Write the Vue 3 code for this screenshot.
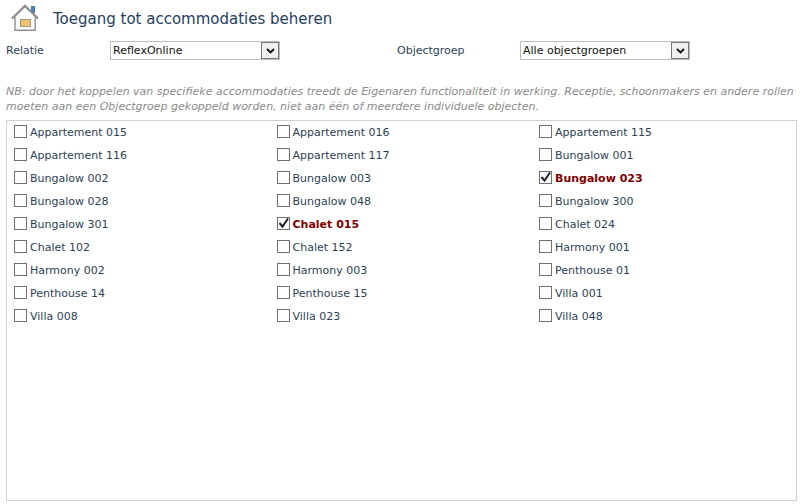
<template>
  <div class="page">
    <div class="header">
      <svg class="home" width="30" height="30" viewBox="0 0 30 30">
        <rect x="21" y="3" width="4" height="7" fill="#4a7fbd" />
        <path d="M5 14 V27.3 H25.2 V14" fill="none" stroke="#8f8f8f" stroke-width="1.4" />
        <path d="M2 15.5 L15 3 L28 15.5" fill="none" stroke="#8f8f8f" stroke-width="2.4" />
        <rect x="10.5" y="16.5" width="10" height="7" fill="#f0c36d" stroke="#a89a80" />
      </svg>
      <h1>Toegang tot accommodaties beheren</h1>
    </div>

    <div class="filters">
      <label class="filter-label first">Relatie</label>
      <div class="select">
        <span class="select-text">ReflexOnline</span>
        <span class="select-btn">
          <svg width="9" height="6" viewBox="0 0 9 6"><path d="M1 1 L4.5 4.5 L8 1" fill="none" stroke="#111" stroke-width="1.8" /></svg>
        </span>
      </div>
      <label class="filter-label second">Objectgroep</label>
      <div class="select">
        <span class="select-text">Alle objectgroepen</span>
        <span class="select-btn">
          <svg width="9" height="6" viewBox="0 0 9 6"><path d="M1 1 L4.5 4.5 L8 1" fill="none" stroke="#111" stroke-width="1.8" /></svg>
        </span>
      </div>
    </div>

    <p class="note">NB: door het koppelen van specifieke accommodaties treedt de Eigenaren functionaliteit in werking. Receptie, schoonmakers en andere rollen moeten aan een Objectgroep gekoppeld worden, niet aan één of meerdere individuele objecten.</p>

    <div class="list">
      <div v-for="item in items" :key="item.name" class="item" :class="{ selected: item.checked }">
        <span class="box">
          <svg v-if="item.checked" width="11" height="11" viewBox="0 0 11 11"><path d="M1.5 5 L4.5 8.5 L10 0.5" fill="none" stroke="#1a2230" stroke-width="2" /></svg>
        </span>
        <span>{{ item.name }}</span>
      </div>
    </div>
  </div>
</template>

<script setup>
const checkedNames = ['Bungalow 023', 'Chalet 015']
const names = [
  'Appartement 015', 'Appartement 016', 'Appartement 115',
  'Appartement 116', 'Appartement 117', 'Bungalow 001',
  'Bungalow 002', 'Bungalow 003', 'Bungalow 023',
  'Bungalow 028', 'Bungalow 048', 'Bungalow 300',
  'Bungalow 301', 'Chalet 015', 'Chalet 024',
  'Chalet 102', 'Chalet 152', 'Harmony 001',
  'Harmony 002', 'Harmony 003', 'Penthouse 01',
  'Penthouse 14', 'Penthouse 15', 'Villa 001',
  'Villa 008', 'Villa 023', 'Villa 048'
]
const items = names.map((name) => ({ name, checked: checkedNames.includes(name) }))
</script>

<style>
html, body {
  background: #fff;
}
</style>

<style scoped>
.page {
  width: 801px;
  height: 504px;
  box-sizing: border-box;
  padding: 3px 4px 3px 6px;
  font-family: "DejaVu Sans", Verdana, sans-serif;
  font-size: 11px;
  color: #2b3f55;
  overflow: hidden;
}

.header {
  display: flex;
  align-items: center;
  height: 30px;
  padding-left: 4px;
}

.home {
  flex: none;
}

h1 {
  margin: 1px 0 0 13px;
  font-size: 15px;
  font-weight: normal;
  color: #24405f;
}

.filters {
  display: flex;
  align-items: center;
  height: 19px;
  margin-top: 8px;
}

.filter-label {
  display: block;
}

.first {
  width: 104px;
}

.second {
  width: 123px;
  margin-left: 117px;
}

.select {
  display: flex;
  width: 170px;
  height: 19px;
  box-sizing: border-box;
  border: 1px solid #bdbdbd;
  background: #fff;
  color: #111;
}

.select-text {
  flex: 1;
  line-height: 18px;
  padding-left: 2px;
}

.select-btn {
  display: flex;
  align-items: center;
  justify-content: center;
  width: 18px;
  box-sizing: border-box;
  border: 1px solid #777;
  background: #f0f0f0;
}

.note {
  margin: 24px 0 0;
  font-style: italic;
  line-height: 15px;
  color: #8a8a8a;
  height: 36px;
}

.list {
  display: grid;
  grid-template-columns: repeat(3, 262.5px);
  grid-auto-rows: 23px;
  align-content: start;
  height: 381px;
  box-sizing: border-box;
  border: 1px solid #cfcfcf;
  padding: 0 0 0 7px;
}

.item {
  display: flex;
  align-items: center;
}

.box {
  display: block;
  width: 13px;
  height: 13px;
  box-sizing: border-box;
  margin: -3px 3px 0 0;
  border: 1px solid #707070;
  background: #fff;
}

.box svg {
  display: block;
}

.selected {
  font-weight: bold;
  color: #800000;
}
</style>
